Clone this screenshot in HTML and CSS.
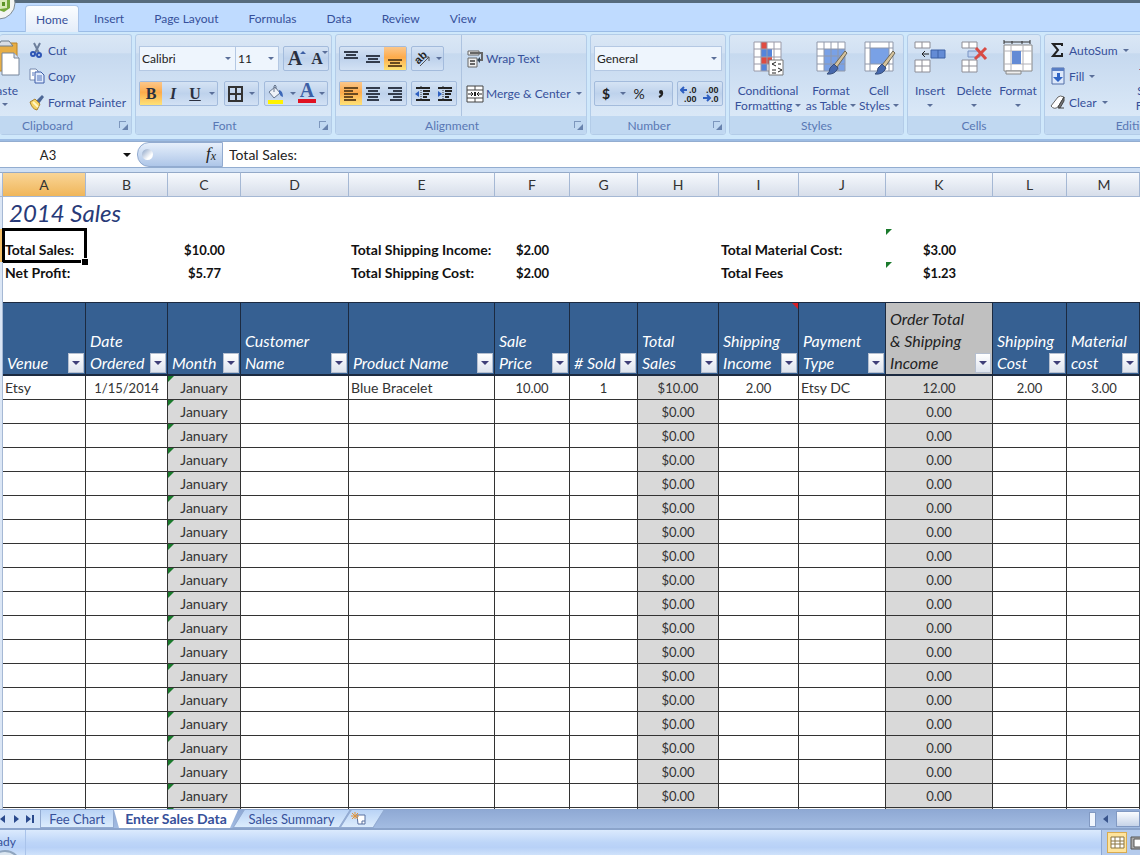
FILE: index.html
```
<!DOCTYPE html>
<html lang="en">
<head>
  <meta charset="UTF-8" />
  <title>2014 Sales</title>
  <link rel="stylesheet" href="styles.css">
</head>
<body>
  <nav class="tabs">
    <button class="office" aria-label="Office">
      <svg width="34" height="34" viewBox="0 0 34 34"><circle cx="17" cy="17" r="16" fill="#f3f5f3" stroke="#7d8a93"/><path d="M14 12l8-2 6 3v9l-6 4-8-3z" fill="#74a83a"/><path d="M18 14l7-1v9l-7 1z" fill="#d9eab8"/><path d="M20 16h3v4h-3z" fill="#5c9427"/></svg>
    </button>
    <button class="tab active">Home</button>
    <button class="tab">Insert</button>
    <button class="tab">Page Layout</button>
    <button class="tab">Formulas</button>
    <button class="tab">Data</button>
    <button class="tab">Review</button>
    <button class="tab">View</button>
  </nav>

  <div class="ribbon">
    <section class="group clipboard">
      <div class="group-body">
        <button class="paste">
          <svg width="36" height="38" viewBox="0 0 36 38"><path d="M4 4h29v28H4z" fill="#e7ae45" stroke="#b98428"/><path d="M14 7l3-5h8l4 5z" fill="#d8dde3" stroke="#6f7c88"/><path d="M18 14h12l5 5v17H18z" fill="#fff" stroke="#76859a"/><path d="M30 14v5h5" fill="#dbe2ee" stroke="#76859a"/></svg>
          <span>Paste</span><i class="arrow"></i>
        </button>
        <div class="stack">
          <button class="cmd"><svg width="18" height="18" viewBox="0 0 18 18"><path d="M6 2l5 10M12 2L7 12" stroke="#6d7f9c" stroke-width="2" fill="none"/><circle cx="5" cy="13" r="2" fill="none" stroke="#2d55b5" stroke-width="2"/><circle cx="11" cy="14" r="2" fill="none" stroke="#2d55b5" stroke-width="2"/></svg>Cut</button>
          <button class="cmd"><svg width="18" height="18" viewBox="0 0 18 18"><path d="M2 2h6l2 2v9H2z" fill="#fff" stroke="#7789ae"/><path d="M7 5h6l3 3v8H7z" fill="#dfe9fb" stroke="#3c5ca8"/><path d="M9 9h5M9 11h5M9 13h5M4 6h2M4 8h2" stroke="#5476bd"/></svg>Copy</button>
          <button class="cmd"><svg width="18" height="18" viewBox="0 0 18 18"><path d="M14 2l2 2-6 8-3-3z" fill="#4d6796"/><path d="M2 9l5-3 5 5-3 6q-5-1-7-8z" fill="#f4d364" stroke="#a98232"/><path d="M5 9l5 5" stroke="#fff6c8" stroke-width="2"/></svg>Format Painter</button>
        </div>
      </div>
      <footer>Clipboard<i class="launcher"></i></footer>
    </section>

    <section class="group font">
      <div class="group-body rows">
        <div class="row">
          <div class="combos"><label class="combo face"><select aria-label="Font"><option>Calibri</option></select></label><label class="combo size"><select aria-label="Font size"><option>11</option></select></label></div>
          <div class="set"><button class="serif big" aria-label="Grow font">A<i class="up"></i></button><button class="serif" aria-label="Shrink font">A<i class="arrow"></i></button></div>
        </div>
        <div class="row">
          <div class="set"><button class="serif on">B</button><button class="serif italic">I</button><button class="serif under">U</button><button class="drop" aria-label="Underline styles"><i class="arrow"></i></button></div>
          <div class="set"><button aria-label="Borders"><svg width="16" height="16" viewBox="0 0 16 16"><path d="M1 1h13v14H1zM8 1v14M1 8h13" fill="none" stroke="#333" stroke-width="2"/></svg></button><button class="drop" aria-label="Border styles"><i class="arrow"></i></button></div>
          <div class="set"><button aria-label="Fill color"><svg width="18" height="20" viewBox="0 0 18 20"><path d="M2 8l6-5 5 6-6 5z" fill="#eef2f8" stroke="#68778e"/><path d="M7 8V2q1-2 2 0v3" fill="none" stroke="#68778e"/><path d="M12 6q4 1 4 7-3-1-4-4z" fill="#3d68b8"/><path d="M1 16h15v4H1z" fill="#fff200"/></svg></button><button class="drop" aria-label="Fill colors"><i class="arrow"></i></button><button class="serif color">A</button><button class="drop" aria-label="Font colors"><i class="arrow"></i></button></div>
        </div>
      </div>
      <footer>Font<i class="launcher"></i></footer>
    </section>

    <section class="group alignment">
      <div class="group-body">
        <div class="rows">
          <div class="row">
            <div class="set"><button aria-label="Top"><svg width="16" height="18" viewBox="0 0 16 18"><path d="M1 2h14M3 5h10M1 8h14" stroke="#333c4c" stroke-width="2"/></svg></button><button aria-label="Middle"><svg width="16" height="18" viewBox="0 0 16 18"><path d="M1 6h14M3 9h10M1 12h14" stroke="#333c4c" stroke-width="2"/></svg></button><button class="on" aria-label="Bottom"><svg width="16" height="18" viewBox="0 0 16 18"><path d="M1 10h14M3 13h10M1 16h14" stroke="#6b4a20" stroke-width="2"/></svg></button></div>
            <div class="set"><button aria-label="Orientation"><svg width="18" height="18" viewBox="0 0 18 18"><text x="1" y="12" transform="rotate(-45 6 9)" font-size="11" font-weight="bold" font-family="Liberation Sans" fill="#222">ab</text><path d="M6 16L15 7M11 7h4v4" fill="none" stroke="#555"/></svg></button><button class="drop" aria-label="Orientations"><i class="arrow"></i></button></div>
          </div>
          <div class="row">
            <div class="set"><button class="on" aria-label="Left"><svg width="16" height="18" viewBox="0 0 16 18"><path d="M1 3h14M1 6h9M1 9h14M1 12h9M1 15h12" stroke="#6b4a20" stroke-width="2"/></svg></button><button aria-label="Center"><svg width="16" height="18" viewBox="0 0 16 18"><path d="M1 3h14M3 6h10M1 9h14M3 12h10M2 15h12" stroke="#333c4c" stroke-width="2"/></svg></button><button aria-label="Right"><svg width="16" height="18" viewBox="0 0 16 18"><path d="M1 3h14M6 6h9M1 9h14M6 12h9M3 15h12" stroke="#333c4c" stroke-width="2"/></svg></button></div>
            <div class="set"><button aria-label="Decrease indent"><svg width="18" height="18" viewBox="0 0 18 18"><path d="M2 3h14M9 6h7M9 9h6M9 12h4M2 15h14" stroke="#222" stroke-width="2"/><path d="M7 1v16" stroke="#333" stroke-dasharray="1 1"/><path d="M1 9l4-3v6z" fill="#2e5fc0"/></svg></button><button aria-label="Increase indent"><svg width="18" height="18" viewBox="0 0 18 18"><path d="M2 3h14M9 6h7M9 9h6M9 12h4M2 15h14" stroke="#222" stroke-width="2"/><path d="M7 1v16" stroke="#333" stroke-dasharray="1 1"/><path d="M6 9L2 6v6z" fill="#2e5fc0"/></svg></button></div>
          </div>
        </div>
        <div class="rows wraps">
          <button class="cmd"><svg width="18" height="18" viewBox="0 0 18 18"><path d="M2 1h11v4H2zM2 8h9v9H2z" fill="#eee" stroke="#666"/><path d="M4 11h5M4 14h5M4 3h12v7h-3" fill="none" stroke="#666" stroke-width="2"/><path d="M11 10l3-3v6z" fill="#345"/></svg>Wrap Text</button>
          <button class="cmd"><svg width="18" height="18" viewBox="0 0 18 18"><path d="M1 1h16v16H1zM1 5h16M1 13h16M9 1v4M9 13v4" fill="#fff" stroke="#444"/><path d="M2 9h4M16 9h-4M5 7l2 2-2 2M13 7l-2 2 2 2" fill="none" stroke="#222"/><path d="M9 7v4" stroke="#222" stroke-width="2"/></svg>Merge &amp; Center<i class="arrow"></i></button>
        </div>
      </div>
      <footer>Alignment<i class="launcher"></i></footer>
    </section>

    <section class="group number">
      <div class="group-body rows">
        <div class="row"><label class="combo format"><select aria-label="Number format"><option>General</option></select></label></div>
        <div class="row">
          <div class="set money"><button><b>$</b></button><button class="drop" aria-label="Currencies"><i class="arrow"></i></button><button>%</button><button aria-label="Comma style"><svg width="8" height="12" viewBox="0 0 8 12"><circle cx="4" cy="4" r="2" fill="#222"/><path d="M5 4q1 3-3 5" fill="none" stroke="#222" stroke-width="2"/></svg></button></div>
          <div class="set decimals"><button aria-label="Increase decimal"><svg width="18" height="18" viewBox="0 0 18 18"><path d="M1 5h6M4 2L1 5l3 3" fill="none" stroke="#2e5fc0" stroke-width="2"/><text x="9" y="8">.0</text><text x="4" y="17">.00</text></svg></button><button aria-label="Decrease decimal"><svg width="18" height="18" viewBox="0 0 18 18"><path d="M1 13h6M5 10l3 3-3 3" fill="none" stroke="#2e5fc0" stroke-width="2"/><text x="4" y="8">.00</text><text x="9" y="17">.0</text></svg></button></div>
        </div>
      </div>
      <footer>Number<i class="launcher"></i></footer>
    </section>

    <section class="group looks">
      <div class="group-body">
        <button class="large cf"><svg width="34" height="36" viewBox="0 0 34 36"><path d="M3 2h27v29H3z" fill="#fff"/><path d="M10 2h6v7h-6zM10 17h11v7H10z" fill="#e04b40"/><path d="M10 9h11v8H10zM10 24h6v7h-6z" fill="#5585db"/><path d="M3 2h27v29H3zM10 2v29M16 2v29M23 2v29M3 9h27M3 17h27M3 24h27" fill="none" stroke="#9a9aa8"/><path d="M18 20h14v15H18z" fill="#fff" stroke="#777"/><path d="M25 22l-4 2 4 2M27 24h3M21 30h4M27 28l4 2-4 2M21 33h4" fill="none" stroke="#222"/></svg><span>Conditional<br>Formatting<i class="arrow"></i></span></button>
        <button class="large ft"><svg width="34" height="36" viewBox="0 0 34 36"><path d="M3 2h28v29H3z" fill="#fff"/><path d="M10 9h21v22H10z" fill="#79a1e6"/><path d="M3 2h28v29H3zM10 2v29M17 2v29M24 2v29M3 9h28M3 16h28M3 24h28" fill="none" stroke="#9098aa"/><path d="M31 11l2 2-10 14-3-2z" fill="#d6c39c" stroke="#6c6758"/><path d="M20 24l4 4q-3 7-11 6 3-2 3-6z" fill="#4668ad" stroke="#394f7b"/></svg><span>Format<br>as Table<i class="arrow"></i></span></button>
        <button class="large cs"><svg width="34" height="36" viewBox="0 0 34 36"><path d="M3 2h28v29H3z" fill="#fff"/><path d="M8 8h19v16H8z" fill="#79a1e6"/><path d="M3 2h28v29H3zM8 2v29M27 2v29M3 8h28M3 24h28" fill="none" stroke="#9098aa"/><path d="M31 11l2 2-10 14-3-2z" fill="#d6c39c" stroke="#6c6758"/><path d="M20 24l4 4q-3 7-11 6 3-2 3-6z" fill="#4668ad" stroke="#394f7b"/></svg><span>Cell<br>Styles<i class="arrow"></i></span></button>
      </div>
      <footer>Styles</footer>
    </section>

    <section class="group cells">
      <div class="group-body">
        <button class="large"><svg width="34" height="36" viewBox="0 0 34 36"><path d="M2 2h15v6H2zM9 2v6M2 20h15v12H2zM9 20v12M2 26h15" fill="#fff" stroke="#8d8d96"/><path d="M18 10h14v8H18zM25 10v8" fill="#638bd5" stroke="#3c60a5"/><path d="M16 14H9M12 11l-3 3 3 3" fill="none" stroke="#222"/></svg><span>Insert<br><i class="arrow"></i></span></button>
        <button class="large"><svg width="34" height="36" viewBox="0 0 34 36"><path d="M5 2h15v6H5zM12 2v6M5 20h15v12H5zM12 20v12M5 26h15" fill="#fff" stroke="#8d8d96"/><path d="M11 11h12v6H11z" fill="#c0d2ef" stroke="#7893c4"/><path d="M19 8l10 11M29 8L18 19" stroke="#d84b45" stroke-width="3"/></svg><span>Delete<br><i class="arrow"></i></span></button>
        <button class="large"><svg width="34" height="36" viewBox="0 0 34 36"><path d="M3 5h28v26H3z" fill="#fff" stroke="#888"/><path d="M3 11h28M3 24h28M10 5v26M22 5v26" stroke="#b2b2b8"/><path d="M11 11h9v13h-9z" fill="#638bd5"/><path d="M3 2h26M3 0v4M29 0v4M11 1v3M21 1v3" stroke="#333"/><path d="M5 31h15v3H5z" fill="#eee" stroke="#888"/></svg><span>Format<br><i class="arrow"></i></span></button>
      </div>
      <footer>Cells</footer>
    </section>

    <section class="group editing">
      <div class="group-body">
        <div class="stack">
          <button class="cmd"><svg width="18" height="18" viewBox="0 0 18 18"><path d="M13 5V3H4l5 6-5 6h9v-3" fill="none" stroke="#222" stroke-width="2"/></svg>AutoSum<i class="arrow"></i></button>
          <button class="cmd"><svg width="18" height="18" viewBox="0 0 18 18"><path d="M3 1h12v16H3z" fill="#dce8fb" stroke="#536fa7"/><path d="M3 1h12v3H3z" fill="#5a7fc4"/><path d="M8 6h3v4h3l-5 5-5-5h4z" fill="#2e63c4"/></svg>Fill<i class="arrow"></i></button>
          <button class="cmd"><svg width="18" height="18" viewBox="0 0 18 18"><path d="M2 13l7-9q2-2 6 0l-6 10q-4 3-7-1z" fill="#fff" stroke="#666"/><path d="M9 14l6-10v4l-4 7zM9 15h6" fill="#777" stroke="#444"/></svg>Clear<i class="arrow"></i></button>
        </div>
        <button class="large sort"><svg width="34" height="36" viewBox="0 0 34 36"><path d="M4 14l4-10 4 10M5 11h6" fill="none" stroke="#345ba9" stroke-width="2"/><path d="M4 19h8L4 29h8" fill="none" stroke="#a33" stroke-width="2"/><path d="M16 6h16l-6 9v12h-4V15z" fill="#d4b35c" stroke="#8b7338"/></svg><span>Sort &amp;<br>Filter<i class="arrow"></i></span></button>
      </div>
      <footer>Editing</footer>
    </section>
  </div>

  <div class="formula-bar">
    <input class="name-box" aria-label="Name box" value="A3">
    <button class="name-drop" aria-label="Names"><i class="arrow"></i></button>
    <div class="fx"><i class="knob"></i><button>f<sub>x</sub></button></div>
    <input class="formula" aria-label="Formula" value="Total Sales:">
  </div>

  <main class="sheet">
    <table>
      <colgroup>
        <col class="w-row"><col class="w-a"><col class="w-b"><col class="w-c"><col class="w-d"><col class="w-e"><col class="w-f"><col class="w-g"><col class="w-h"><col class="w-i"><col class="w-j"><col class="w-k"><col class="w-l"><col>
      </colgroup>
      <thead>
        <tr class="letters"><td></td><th class="sel">A</th><th>B</th><th>C</th><th>D</th><th>E</th><th>F</th><th>G</th><th>H</th><th>I</th><th>J</th><th>K</th><th>L</th><th>M</th></tr>
      </thead>
      <tbody>
        <tr class="title"><td class="edge"></td><td colspan="13">2014 Sales</td></tr>
        <tr class="sum current"><td class="edge"></td><td class="cursor">Total Sales:</td><td></td><td class="mid">$10.00</td><td></td><td>Total Shipping Income:</td><td class="mid">$2.00</td><td></td><td></td><td colspan="2">Total Material Cost:</td><td class="mid flag">$3.00</td><td></td><td></td></tr>
        <tr class="sum"><td class="edge"></td><td>Net Profit:</td><td></td><td class="mid">$5.77</td><td></td><td>Total Shipping Cost:</td><td class="mid">$2.00</td><td></td><td></td><td colspan="2">Total Fees</td><td class="mid flag">$1.23</td><td></td><td></td></tr>
        <tr class="blank"><td class="edge"></td><td colspan="13"></td></tr>
        <tr class="heads">
          <td class="edge"></td>
          <th>Venue<button class="filter" aria-label="Filter"><i class="arrow"></i></button></th>
          <th>Date<br>Ordered<button class="filter" aria-label="Filter"><i class="arrow"></i></button></th>
          <th>Month<button class="filter" aria-label="Filter"><i class="arrow"></i></button></th>
          <th>Customer<br>Name<button class="filter" aria-label="Filter"><i class="arrow"></i></button></th>
          <th>Product Name<button class="filter" aria-label="Filter"><i class="arrow"></i></button></th>
          <th>Sale<br>Price<button class="filter" aria-label="Filter"><i class="arrow"></i></button></th>
          <th># Sold<button class="filter" aria-label="Filter"><i class="arrow"></i></button></th>
          <th>Total<br>Sales<button class="filter" aria-label="Filter"><i class="arrow"></i></button></th>
          <th class="note">Shipping<br>Income<button class="filter" aria-label="Filter"><i class="arrow"></i></button></th>
          <th>Payment<br>Type<button class="filter" aria-label="Filter"><i class="arrow"></i></button></th>
          <th class="gray">Order Total<br>&amp; Shipping<br>Income<button class="filter" aria-label="Filter"><i class="arrow"></i></button></th>
          <th>Shipping<br>Cost<button class="filter" aria-label="Filter"><i class="arrow"></i></button></th>
          <th>Material<br>cost<button class="filter" aria-label="Filter"><i class="arrow"></i></button></th>
        </tr>
      </tbody>
      <tbody id="rows"></tbody>
    </table>
  </main>

  <div class="sheet-tabs">
    <div class="steps">
      <button aria-label="Previous sheet"><svg width="6" height="8" viewBox="0 0 6 8"><path d="M5 0v8L0 4z"/></svg></button>
      <button aria-label="Next sheet"><svg width="6" height="8" viewBox="0 0 6 8"><path d="M1 0v8l5-4z"/></svg></button>
      <button aria-label="Last sheet"><svg width="8" height="8" viewBox="0 0 8 8"><path d="M0 0v8l5-4zM6 0h2v8H6z"/></svg></button>
    </div>
    <button class="sheet-tab fee">Fee Chart</button>
    <button class="sheet-tab entry">Enter Sales Data</button>
    <button class="sheet-tab summary">Sales Summary</button>
    <button class="sheet-tab new" aria-label="Insert sheet"><svg width="18" height="14" viewBox="0 0 18 14"><path d="M6 3h8v9H7z" fill="#fff" stroke="#5870a0"/><path d="M11 12v-3h3" fill="none" stroke="#5870a0"/><path d="M4 0v7M0 4h8M1 1l6 6M7 1L1 7" stroke="#e0943a"/></svg></button>
    <div class="scroll"><i class="split"></i><button aria-label="Scroll left"><svg width="6" height="8" viewBox="0 0 6 8"><path d="M5 0v8L0 4z"/></svg></button><i class="thumb"></i></div>
  </div>

  <div class="status">
    <span class="ready">Ready</span>
    <div class="views">
      <button class="on" aria-label="Normal view"><svg width="16" height="14" viewBox="0 0 16 14"><path d="M1 1h13v11H1zM1 5h13M1 8h13M5 1v11M10 1v11" fill="#fff" stroke="#8a7440"/></svg></button>
      <button aria-label="Page layout view"><svg width="16" height="14" viewBox="0 0 16 14"><path d="M1 1h13v12H1z" fill="#aaa" stroke="#555"/><path d="M4 3h7v8H4z" fill="#fff" stroke="#555"/></svg></button>
    </div>
    <i class="orb"></i>
  </div>

  <script>
    const sales = [
      ["Etsy", "1/15/2014", "January", "", "Blue Bracelet", "10.00", "1", "$10.00", "2.00", "Etsy DC", "12.00", "2.00", "3.00"]
    ];
    // the rest of the month is still empty, only the formulas show
    while (sales.length < 18) {
      sales.push(["", "", "January", "", "", "", "", "$0.00", "", "", "0.00", "", ""]);
    }
    sales.push(Array(13).fill(""));

    const leftCols = [0, 3, 4, 9];
    const grayCols = [2, 7, 10];
    const body = document.getElementById("rows");

    for (const sale of sales) {
      const tr = document.createElement("tr");
      tr.innerHTML = '<td class="edge"></td>';
      sale.forEach((value, i) => {
        const td = document.createElement("td");
        td.textContent = value;
        if (!leftCols.includes(i)) td.classList.add("mid");
        if (grayCols.includes(i)) td.classList.add("gray");
        if (i === 2) td.classList.add("flag");
        tr.appendChild(td);
      });
      body.appendChild(tr);
    }
  </script>
</body>
</html>
```
FILE: styles.css
```
* {
  box-sizing: border-box;
}
body {
  margin: 0;
  height: 100vh;
  display: flex;
  flex-direction: column;
  overflow: hidden;
  font-family: Lato, "Open Sans", sans-serif;
  font-size: 12px;
  color: #36509a;
  background: #cfe0f5;
}
button, input, select {
  font: inherit;
  color: inherit;
  border: 0;
  padding: 0;
  margin: 0;
  background: none;
}
svg {
  flex: none;
  display: block;
}
.arrow {
  display: inline-block;
  border: 3px solid transparent;
  border-top-color: #5a6f99;
  border-bottom: 0;
}

/* tabs */
.tabs {
  position: relative;
  display: flex;
  flex: none;
  height: 32px;
  padding: 2px 0 0 25px;
  border-top: 3px solid #566b7d;
  border-bottom: 1px solid #9bbce6;
  background: #bfdbff;
}
.tab {
  height: 27px;
  padding: 0 15px;
}
.tab.active {
  width: 54px;
  padding: 0;
  border: 1px solid #a9c4e8;
  border-bottom: 0;
  border-radius: 4px 4px 0 0;
  background: linear-gradient(#fbfdff, #e4edf9);
}
.office {
  position: absolute;
  left: -18px;
  top: -17px;
}

/* ribbon */
.ribbon {
  display: flex;
  flex: none;
  gap: 3px;
  height: 110px;
  padding: 2px 0 4px;
  overflow: hidden;
  border-bottom: 3px solid #9dbce3;
  background: #cfe8fb;
}
.group {
  display: flex;
  flex-direction: column;
  flex: none;
  border: 1px solid #b3cce8;
  border-radius: 3px;
  overflow: hidden;
  background: linear-gradient(#dae7f5, #d2e1f3 18%, #c6d9ef 19%, #dae8f7 82%);
}
.group footer {
  position: relative;
  height: 18px;
  line-height: 19px;
  text-align: center;
  color: #5877b4;
  background: #c0d8f1;
}
.launcher {
  position: absolute;
  right: 5px;
  top: 5px;
  width: 7px;
  height: 7px;
  border: 1px solid #7d97bd;
  border-right: 0;
  border-bottom: 0;
}
.launcher::after {
  content: "";
  position: absolute;
  left: 2px;
  top: 2px;
  border: 3px solid #6883ae;
  border-top-color: transparent;
  border-left-color: transparent;
}
.group-body {
  flex: 1;
  display: flex;
}
.clipboard { width: 132px; border-left: 0; }
.font { width: 197px; }
.alignment { width: 252px; }
.number { width: 136px; }
.looks { width: 175px; }
.cells { width: 134px; }
.editing { width: 180px; }
.font footer, .alignment footer, .number footer { padding-right: 18px; }
.clipboard footer { padding-right: 36px; }

.paste {
  flex: none;
  width: 38px;
  margin: 4px 0 0 -18px;
  display: flex;
  flex-direction: column;
  align-items: flex-end;
}
.paste span {
  line-height: 20px;
  margin: 4px 2px 0 0;
}
.paste .arrow {
  margin: 2px 12px 0 0;
}
.stack {
  display: flex;
  flex-direction: column;
  margin-left: 8px;
  padding-top: 2px;
}
.cmd {
  display: flex;
  align-items: center;
  gap: 2px;
  height: 26px;
  white-space: nowrap;
}
.cmd .arrow {
  margin-left: 3px;
}
.rows {
  display: flex;
  flex-direction: column;
  gap: 10px;
  padding: 11px 3px 0;
}
.row {
  display: flex;
  gap: 4px;
}
.set {
  display: flex;
  height: 25px;
  border: 1px solid #a3bbdc;
  border-radius: 2px;
  background: linear-gradient(#d5e3f4, #bed2ec 50%, #d2e1f4);
}
.set button {
  position: relative;
  width: 22px;
  display: flex;
  align-items: center;
  justify-content: center;
}
.set .drop {
  width: 11px;
}
.font .row { justify-content: space-between; }
.set .on {
  background: linear-gradient(#fbc78b, #fdab4b 45%, #fee277);
}
.alignment .row:first-child .drop { width: 9px; }
.combos {
  display: flex;
}
.combo {
  position: relative;
  display: flex;
  height: 25px;
  border: 1px solid #b4c8e3;
  background: #eef5fd;
  color: #222;
}
.combo select {
  appearance: none;
  width: 100%;
  padding-left: 2px;
}
.combo::after {
  content: "";
  position: absolute;
  right: 4px;
  top: 10px;
  border: 3px solid transparent;
  border-top-color: #5a6f99;
  border-bottom: 0;
}
.face { width: 97px; }
.size { width: 43px; border-left: 0; }
.format { width: 128px; }
.set .serif {
  font-family: "Liberation Serif", serif;
  font-weight: bold;
  font-size: 16px;
  color: #2a3040;
}
.set .big { font-size: 20px; }
.set .italic { font-style: italic; }
.set .under { text-decoration: underline; }
.serif .arrow, .serif .up {
  position: absolute;
  right: 0;
  top: 4px;
}
.up {
  border: 3px solid transparent;
  border-bottom-color: #3c5fa5;
  border-top: 0;
}
.set .color {
  font-size: 20px;
  line-height: 17px;
  color: #3c5fa5;
  align-items: flex-start;
  border-bottom: 4px solid #e01222;
  width: 18px;
  height: 21px;
}
.wraps {
  margin-left: 1px;
  padding-left: 4px;
  border-left: 1px solid #adc3e0;
}
.wraps .cmd { height: 25px; }
.money { width: 80px; justify-content: space-between; font-size: 14px; color: #222; }
.decimals text {
  font: bold 9px "Liberation Sans", sans-serif;
  fill: #222;
}
.large {
  display: flex;
  flex-direction: column;
  align-items: center;
  padding-top: 5px;
  width: 42px;
  line-height: 15px;
  white-space: nowrap;
}
.large span { margin-top: 7px; }
.large .arrow { margin-left: 3px; vertical-align: 3px; }
.cf { width: 74px; margin-left: 1px; }
.ft { width: 52px; }
.cs { width: 44px; }
.cells .large { flex: 1; }
.cells .arrow { margin: 0; }
.looks .large span { text-align: center; }
.editing .stack { margin-left: 4px; width: 84px; }

/* formula bar */
.formula-bar {
  display: flex;
  flex: none;
  height: 25px;
  margin-bottom: 5px;
  background: #fff;
  color: #222;
  font-size: 14px;
  outline: 1px solid #93add0;
}
.name-box { width: 96px; text-align: center; font-size: 13px; }
.name-drop {
  display: flex;
  align-items: center;
  width: 41px;
  padding-left: 27px;
}
.name-drop .arrow {
  border-width: 4px;
  border-bottom: 0;
  border-top-color: #111;
}
.fx {
  width: 86px;
  display: flex;
  align-items: center;
  justify-content: space-between;
  padding: 0 6px 0 4px;
  border: 1px solid #92abd0;
  border-radius: 12px 0 0 12px;
  background: linear-gradient(#e6effb, #aec6e8);
}
.fx button {
  font: italic 17px "Liberation Serif", serif;
  line-height: 20px;
}
.fx sub { font-size: 12px; vertical-align: -1px; }
.knob {
  width: 11px;
  height: 11px;
  border-radius: 50%;
  background: linear-gradient(135deg, #8aa2c6, #fff 70%);
}
.formula { flex: 1; padding-left: 6px; }

/* sheet */
.sheet {
  flex: 1;
  min-height: 0;
  overflow: hidden;
  background: #fff;
}
table {
  width: 100%;
  table-layout: fixed;
  border-collapse: separate;
  border-spacing: 0;
  color: #333;
  font-size: 14px;
}
td, th {
  position: relative;
  height: 24px;
  padding: 0 2px;
  line-height: 20px;
  white-space: nowrap;
}
td:last-child, th:last-child { padding-right: 0; }
.w-row { width: 3px; }
.w-a { width: 83px; }
.w-b { width: 82px; }
.w-c { width: 73px; }
.w-d { width: 108px; }
.w-e { width: 146px; }
.w-f { width: 75px; }
.w-g { width: 68px; }
.w-h { width: 81px; }
.w-i { width: 80px; }
.w-j { width: 87px; }
.w-k { width: 107px; }
.w-l { width: 74px; }
.letters td, .letters th {
  height: 25px;
  font-weight: normal;
  border-right: 1px solid #a5b8d4;
  border-top: 1px solid #93a9c8;
  border-bottom: 1px solid #a5b8d4;
  background: linear-gradient(#f6f9fd, #d7deea);
}
.letters .sel {
  background: linear-gradient(#f9d597, #f0b65a);
}
td.edge {
  padding: 0;
  background: #dbe6f5;
  border: 0;
  border-right: 1px solid #a5b8d4;
}
.current td.edge { background: #f5bf66; }
.title td {
  height: 32px;
  padding-left: 6px;
  font-size: 24px;
  font-style: italic;
  color: #283a78;
}
.sum td {
  height: 22px;
  font-weight: bold;
  color: #111;
}
.sum.current td {
  height: 33px;
  padding-bottom: 2px;
  vertical-align: bottom;
}
.blank td { height: 18px; }
td.mid {
  text-align: center;
  font-size: 13px;
}
#rows .flag { font-size: 14px; }
.cursor::before {
  content: "";
  position: absolute;
  inset: -1px;
  border: 3px solid #000;
}
.cursor::after {
  content: "";
  position: absolute;
  right: -2px;
  bottom: -3px;
  width: 6px;
  height: 6px;
  background: #000;
  border: 1px solid #fff;
  border-right: 0;
  border-bottom: 0;
}
.flag::before {
  content: "";
  position: absolute;
  left: 0;
  top: 0;
  border: 3px solid #1a7a2c;
  border-right-color: transparent;
  border-bottom-color: transparent;
}
.heads th {
  height: 74px;
  padding: 0 0 0 4px;
  vertical-align: bottom;
  text-align: left;
  font-size: 16px;
  font-style: italic;
  font-weight: normal;
  line-height: 22px;
  color: #fff;
  background: #366092;
  border-right: 1px solid #1c2a40;
  border-top: 1px solid #1c2a40;
  border-bottom: 2px solid #1c2a40;
}
.heads .gray {
  background: #c0c0c0;
  color: #222;
}
.filter {
  position: absolute;
  right: 1px;
  bottom: 1px;
  display: flex;
  align-items: center;
  justify-content: center;
  width: 16px;
  height: 20px;
  border: 1px solid #b5bfd0;
  background: linear-gradient(#fff, #dde3ee);
}
.filter .arrow {
  border-width: 4px;
  border-bottom: 0;
  border-top-color: #3f3f78;
}
.note::after {
  content: "";
  position: absolute;
  right: 0;
  top: 0;
  border: 3px solid #d81f26;
  border-left-color: transparent;
  border-bottom-color: transparent;
}
#rows td:not(.edge) {
  border-right: 1px solid #333;
  border-bottom: 1px solid #333;
}
#rows .gray { background: #d9d9d9; }

/* sheet tabs */
.sheet-tabs {
  display: flex;
  flex: none;
  height: 21px;
  border-top: 1px solid #8ca6cf;
  border-bottom: 2px solid #8ba4cb;
  background: linear-gradient(#8fa9d4, #a3bce2);
  font-size: 13px;
}
.steps {
  display: flex;
  align-items: center;
  justify-content: space-between;
  width: 40px;
  padding: 0 6px 0 0;
  background: #d3e3f8;
  fill: #2b4a8c;
}
.sheet-tab {
  position: relative;
  z-index: 0;
  line-height: 18px;
}
.sheet-tab::before {
  content: "";
  position: absolute;
  inset: 0;
  z-index: -1;
  border: 1px solid #93abd1;
  border-top: 0;
  background: linear-gradient(#b9d3f5, #dcecfd);
}
.fee { width: 74px; }
.entry { width: 124px; font-size: 14px; font-weight: bold; z-index: 1; }
.entry::before {
  background: #fff;
  border: 0;
  clip-path: polygon(0 0, 100% 0, calc(100% - 8px) 100%, 5px 100%);
}
.summary { width: 107px; }
.summary::before, .new::before { transform: skewX(-32deg); }
.new { width: 34px; padding-left: 6px; }
.scroll {
  display: flex;
  align-items: center;
  gap: 7px;
  margin-left: auto;
  fill: #39558c;
}
.split {
  width: 7px;
  height: 15px;
  border: 1px solid #8199c2;
  background: #f1f6fd;
}
.thumb {
  width: 24px;
  height: 16px;
  border: 1px solid #8199c2;
  background: linear-gradient(#fafcff, #c6d3e8);
}

/* status */
.status {
  position: relative;
  display: flex;
  flex: none;
  justify-content: space-between;
  height: 25px;
  overflow: hidden;
  background: linear-gradient(#dbeafd, #bdd5f8 50%, #b8d1f7 70%, #cfe2fb);
}
.ready {
  width: 26px;
  padding-right: 9px;
  direction: rtl;
  line-height: 24px;
  border-right: 1px solid #a9c3ea;
}
.views {
  display: flex;
  gap: 1px;
  padding: 2px 0 2px 5px;
  border-left: 1px solid #8ba7d4;
  background: #b5cbec;
  margin-right: -8px;
}
.views button {
  width: 20px;
  padding-left: 2px;
}
.views .on { background: #ffe49c; border: 1px solid #d9ab50; }
.orb {
  position: absolute;
  left: -12px;
  top: 20px;
  width: 34px;
  height: 34px;
  border: 2px solid #8fa5bf;
  border-radius: 50%;
  background: #dbe6f0;
}
```
